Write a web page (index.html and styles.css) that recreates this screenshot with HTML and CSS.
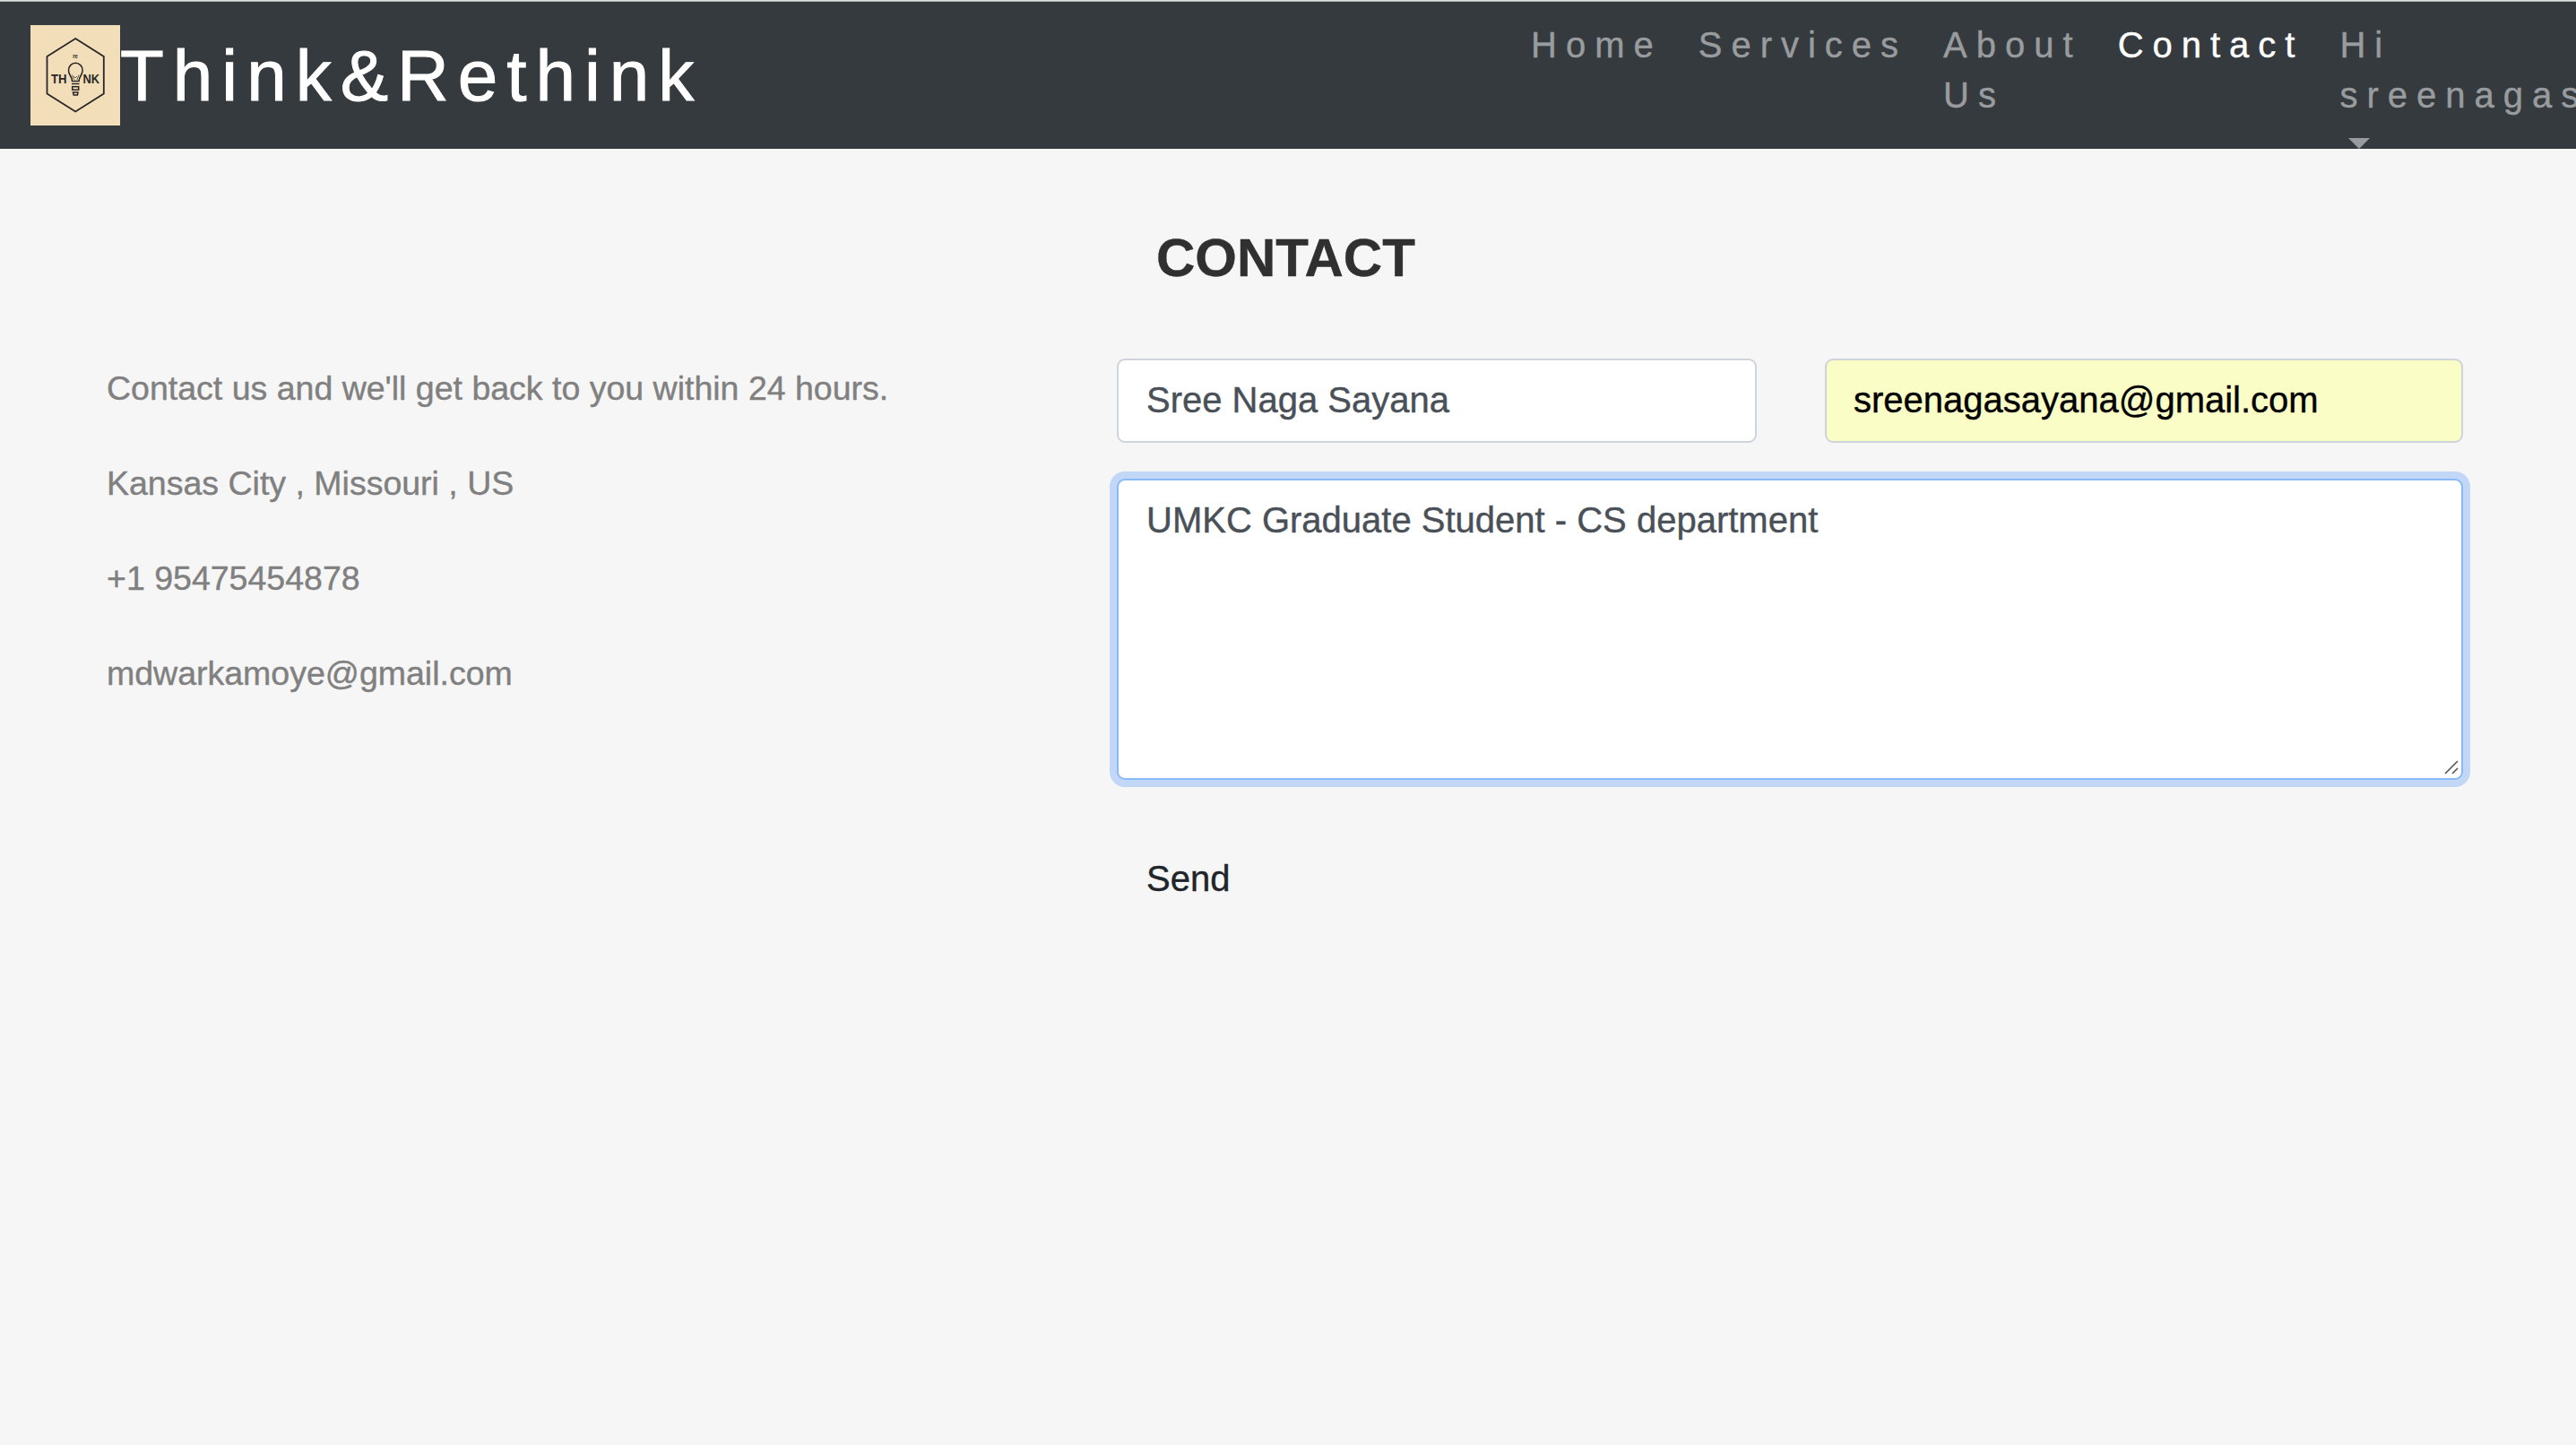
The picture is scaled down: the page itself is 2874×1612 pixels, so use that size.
FILE: index.html
```html
<!DOCTYPE html>
<html lang="en">
<head>
<meta charset="utf-8">
<title>Think&amp;Rethink - Contact</title>
<link rel="stylesheet" href="styles.css">
</head>
<body>
<header class="navbar">
  <a class="brand">
    <svg class="logo" viewBox="0 0 100 112" aria-hidden="true">
      <rect width="100" height="112" fill="#f2deb9"/>
      <g fill="none" stroke="#2a2627" stroke-width="1.8">
        <path d="M50.2 15 81.8 35V76.500L50.200 96.500 18.500 76.500V35Z"/>
        <path d="M46.500 62.500C46.500 57 42.500 56 42.500 50.500a7.800 8.300 0 0 1 15.600 0C58.100 56 54.100 57 54.100 62.500Z" stroke-width="1.500"/>
        <path d="M46.500 55.500 48.500 61M54 55.500 52 61M48 57l2 2 2-2" stroke-width=".7"/>
        <path d="M46 65.500h8.500" stroke-width="1.400"/>
        <rect x="46.700" y="68.700" width="7" height="3.500" stroke-width="1.500"/>
        <path d="M47.500 75h5.500l-.6 3h-4.200Z" stroke-width="1.500"/>
      </g>
      <g class="logo-text">
        <text x="47.200" y="37" font-size="7" textLength="5.600" lengthAdjust="spacingAndGlyphs">re</text>
        <text x="23" y="65.300" font-size="15.500" textLength="17.500" lengthAdjust="spacingAndGlyphs">TH</text>
        <text x="58.500" y="65.300" font-size="15.500" textLength="18.500" lengthAdjust="spacingAndGlyphs">NK</text>
      </g>
    </svg>
    <span class="brand-name">Think&amp;Rethink</span>
  </a>
  <nav class="nav">
    <a class="nav-link">Home</a>
    <a class="nav-link">Services</a>
    <a class="nav-link">About Us</a>
    <a class="nav-link active">Contact</a>
    <a class="nav-link dropdown">Hi sreenagasayana <span class="caret"></span></a>
  </nav>
</header>
<main class="contact">
  <h1 class="title">CONTACT</h1>
  <div class="columns">
    <section class="info">
      <p>Contact us and we'll get back to you within 24 hours.</p>
      <p>Kansas City , Missouri , US</p>
      <p>+1 95475454878</p>
      <p>mdwarkamoye@gmail.com</p>
    </section>
    <form class="form">
      <input class="field" type="text" value="Sree Naga Sayana">
      <input class="field autofilled" type="text" value="sreenagasayana@gmail.com">
      <div class="message">
        <textarea class="field area" spellcheck="false">UMKC Graduate Student - CS department</textarea>
        <svg class="grip" viewBox="0 0 16 16" aria-hidden="true"><path d="M1 15 15 1M9 15l6-6" fill="none" stroke="#555" stroke-width="1.600"/></svg>
      </div>
      <button class="send" type="button">Send</button>
    </form>
  </div>
</main>
</body>
</html>
```
FILE: styles.css
```css
* {
  box-sizing: border-box;
}

body {
  margin: 0;
  min-height: 100vh;
  overflow: hidden;
  background: #f6f6f6;
  font-family: "Liberation Sans", Arial, sans-serif;
  font-size: 40px;
  -webkit-text-stroke: 0.4px currentColor;
}

.navbar {
  display: flex;
  align-items: flex-start;
  justify-content: space-between;
  height: 166px;
  padding: 26px 0 0 34px;
  overflow: hidden;
  border-top: 1px solid #dfe1e1;
  box-shadow: inset 0 1px #abb5b6;
  background: #353a3e;
}

.brand {
  display: flex;
  align-items: center;
  height: 112px;
  margin-top: 1px;
  color: #fff;
}

.logo {
  width: 100px;
  height: 112px;
}

.logo-text {
  fill: #2a2627;
  font-weight: bold;
  -webkit-text-stroke: 0;
}

.brand-name {
  padding-top: 1px;
  font-size: 80px;
  line-height: 112px;
  letter-spacing: 10px;
  -webkit-text-stroke: 1px currentColor;
}

.nav {
  display: flex;
  flex: none;
  width: 1186px;
  margin-top: -5px;
}

.nav-link {
  flex: none;
  padding: 0 20px;
  line-height: 56px;
  letter-spacing: 10px;
  color: #999c9e;
}

.nav-link:nth-child(3),
.dropdown {
  width: min-content;
}

.nav-link.active {
  color: #fff;
}

.caret {
  display: inline-block;
  margin-left: 10px;
  border: 12px solid transparent;
  border-top-color: currentColor;
  border-bottom: 0;
  vertical-align: 10px;
}

.title {
  margin: 0;
  padding: 82px 0 0 1290px;
  font-size: 60px;
  line-height: 80px;
  color: #303030;
}

.columns {
  display: grid;
  grid-template-columns: 1127px 1502px;
  padding: 72px 0 0 119px;
}

.info {
  padding-top: 5px;
  font-size: 37.5px;
  color: #808080;
}

.info p {
  margin: 0 0 50px;
  line-height: 56px;
}

.form {
  display: grid;
  grid-template-columns: 714px 712px;
  column-gap: 76px;
  row-gap: 40px;
  align-content: start;
}

.field {
  width: 100%;
  height: 94px;
  padding: 0 31px 1px;
  border: 2px solid #ced4da;
  border-radius: 9px;
  background: #fff;
  color: #495057;
  font: inherit;
  line-height: 56px;
}

.autofilled {
  padding-left: 30px;
  background: #fafdc5;
  color: #000;
}

.message {
  position: relative;
  grid-column: 1 / -1;
  height: 336px;
}

.area {
  display: block;
  height: 336px;
  padding: 16px 31px;
  border-color: #8ab9f8;
  box-shadow: 0 0 0 8px #c2d6f6;
  outline: none;
  overflow: hidden;
  resize: none;
}

.grip {
  position: absolute;
  right: 5px;
  bottom: 6px;
  width: 16px;
  height: 16px;
}

.send {
  justify-self: start;
  margin-top: 24px;
  padding: 16px 33px;
  border: 0;
  background: none;
  color: #212529;
  font: inherit;
  line-height: 60px;
}
```
